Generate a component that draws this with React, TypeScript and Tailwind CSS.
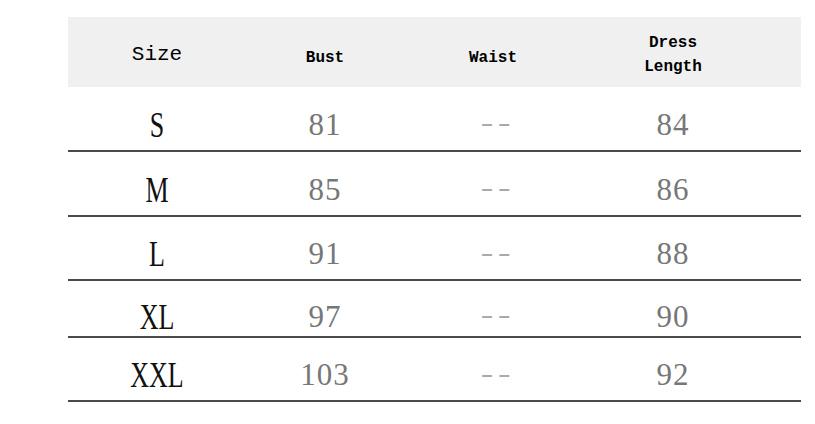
const rows = [
  { size: "S", bust: "81", waist: "--", length: "84", h: "h-[63px]" },
  { size: "M", bust: "85", waist: "--", length: "86", h: "h-[63px]" },
  { size: "L", bust: "91", waist: "--", length: "88", h: "h-[62px]" },
  { size: "XL", bust: "97", waist: "--", length: "90", h: "h-[55px]" },
  { size: "XXL", bust: "103", waist: "--", length: "92", h: "h-[62px]" },
];

const cols = "grid grid-cols-[178px_158px_178px_182px_1fr] items-center";

export default function App() {
  return (
    <div className="w-[815px] h-[424px] bg-white pt-[17px] pl-[68px]">
      <div className="w-[733px]">
        <div
          className={`${cols} h-[70px] bg-[#f0f0f0] text-center text-black pt-[5px]`}
          style={{ fontFamily: '"Liberation Mono", "DejaVu Sans Mono", monospace' }}
        >
          <div className="text-[21px]">Size</div>
          <div className="text-[16px] font-bold pt-[6px]">Bust</div>
          <div className="text-[16px] font-bold pt-[6px]">Waist</div>
          <div className="text-[16px] font-bold leading-[24px] pt-[1px]">
            Dress
            <br />
            Length
          </div>
          <div />
        </div>
        {rows.map((r) => (
          <div key={r.size}>
            <div
              className={`${cols} ${r.h} text-center pt-[13px]`}
              style={{ fontFamily: '"Liberation Serif", "DejaVu Serif", serif' }}
            >
              <div className="text-[26px] text-[#111]">
                <span className="inline-block scale-y-[1.35]">{r.size}</span>
              </div>
              <div className="text-[31px] text-[#777] tracking-[1px]">{r.bust}</div>
              <div
                className="text-[24px] text-[#aaa] tracking-[-3px]"
                style={{ fontFamily: '"Liberation Mono", monospace' }}
              >
                <span className="inline-block scale-x-[1.5]">{r.waist}</span>
              </div>
              <div className="text-[31px] text-[#777] tracking-[1px]">{r.length}</div>
              <div />
            </div>
            <div className="h-[2px] bg-[#4a4a4a]" />
          </div>
        ))}
      </div>
    </div>
  );
}
